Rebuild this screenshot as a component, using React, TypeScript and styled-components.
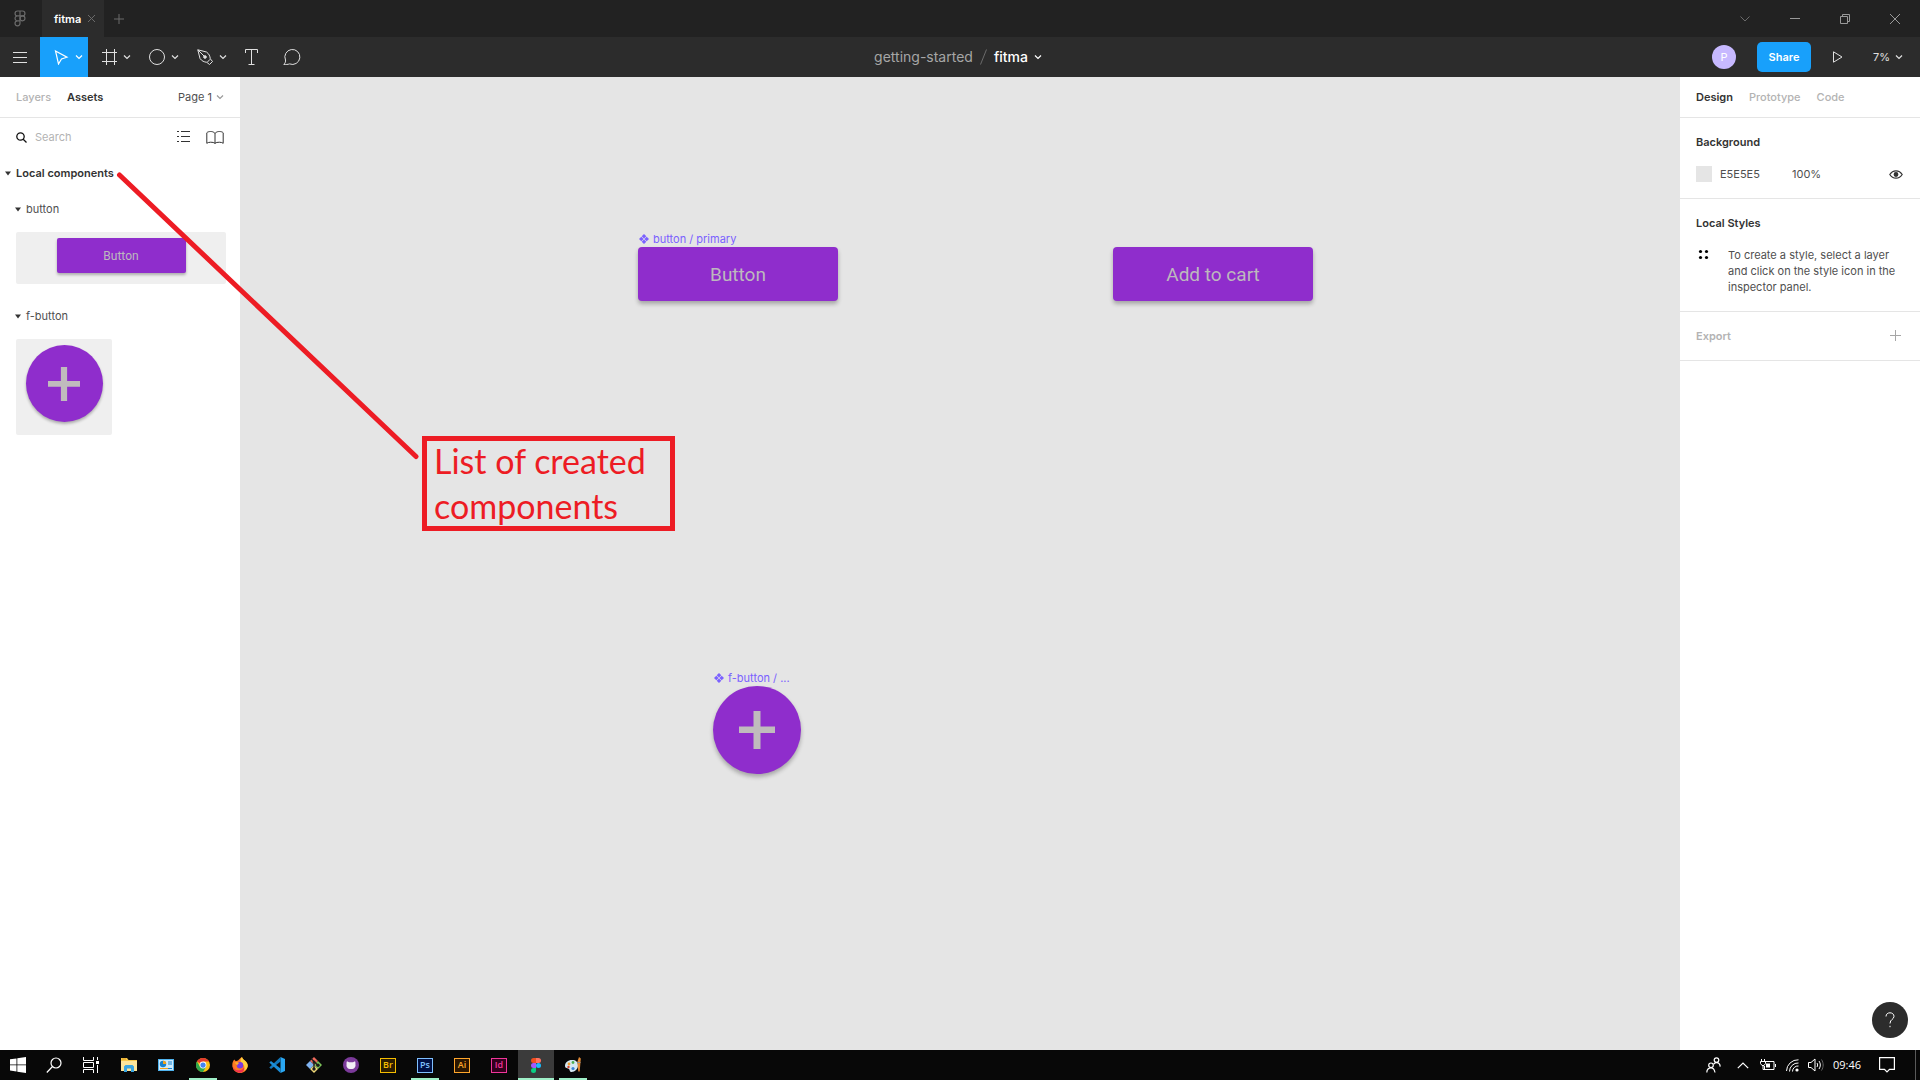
import React from "react";
import styled, { createGlobalStyle, css } from "styled-components";

const c = {
  blue: "#18a0fb",
  purple: "#8f2dcc",
  label: "#7b61ff",
  onPurple: "#bdb9bd",
  red: "#ed1c24",
  ink: "#333333",
  body: "#4f4f4f",
  soft: "#b3b3b3",
  line: "#e5e5e5",
};

const Global = createGlobalStyle`
  *, *::before, *::after { box-sizing: border-box; }
  body { margin: 0; }
  body, button, input { font-family: Inter, "Liberation Sans", sans-serif; font-size: 11px; line-height: 16px; }
  button { border: 0; padding: 0; background: none; color: inherit; cursor: default; }
  h1, h2, h3, p { margin: 0; font-size: 11px; font-weight: 400; }
  svg { display: block; flex: none; }
`;

const Screen = styled.div`
  display: flex;
  flex-direction: column;
  min-height: 100vh;
  position: relative;
  overflow: hidden;
`;

/* ---------- title bar ---------- */
const TitleBar = styled.header`
  display: flex;
  height: 37px;
  background: #222222;
  color: #6b6b6b;
`;
const HomeButton = styled.button`
  width: 42px;
  padding-right: 2px;
  display: grid;
  place-items: center;
`;
const FileTab = styled.div`
  display: flex;
  align-items: center;
  gap: 6px;
  padding: 0 8px 0 12px;
  background: #2c2c2c;
  color: #ffffff;
  font-weight: 600;
`;
const TabAction = styled.button`
  display: grid;
  place-items: center;
  color: #6b6b6b;
`;
const NewTab = styled(TabAction)`
  width: 30px;
`;
const WindowControls = styled.div`
  display: flex;
  margin-left: auto;
`;
const WindowButton = styled.button`
  width: 50px;
  display: grid;
  place-items: center;
`;

/* ---------- toolbar ---------- */
const Toolbar = styled.nav`
  display: grid;
  grid-template-columns: 1fr auto 1fr;
  height: 40px;
  background: #2c2c2c;
  color: #e0e0e0;
`;
const Tools = styled.div`
  display: flex;
`;
const Tool = styled.button<{ $active?: boolean; $menu?: boolean }>`
  display: flex;
  align-items: center;
  justify-content: ${(p) => (p.$menu ? "flex-start" : "center")};
  gap: 6px;
  width: ${(p) => (p.$menu ? 48 : 40)}px;
  padding-left: ${(p) => (p.$menu ? 13 : 0)}px;
  ${(p) => p.$active && css`background: ${c.blue}; color: #ffffff;`}
`;
const FileName = styled.div`
  display: flex;
  align-items: center;
  gap: 7px;
  padding-right: 4px;
  font-size: 14px;
  color: #a6a6a6;
`;
const FileMenu = styled.button`
  display: flex;
  align-items: center;
  gap: 6px;
  font-size: 14px;
  font-weight: 500;
  color: #ffffff;
`;
const Sharing = styled.div`
  display: flex;
  align-items: center;
  justify-content: flex-end;
  padding-right: 17px;
`;
const Avatar = styled.span`
  width: 24px;
  height: 24px;
  margin-right: 21px;
  border-radius: 50%;
  background: #c7b9ff;
  color: #ffffff;
  display: grid;
  place-items: center;
`;
const ShareButton = styled.button`
  width: 54px;
  height: 30px;
  margin-right: 20px;
  border-radius: 5px;
  background: ${c.blue};
  color: #ffffff;
  font-weight: 600;
`;
const ZoomButton = styled.button`
  display: flex;
  align-items: center;
  gap: 5px;
  margin-left: 30px;
`;

/* ---------- workspace ---------- */
const Workspace = styled.div`
  flex: 1;
  display: grid;
  grid-template-columns: 240px minmax(0, 1fr) 240px;
`;
const Panel = styled.aside`
  background: #ffffff;
  color: ${c.ink};
`;
const PanelTabs = styled.div`
  display: flex;
  align-items: center;
  gap: 16px;
  height: 41px;
  padding: 0 16px;
  border-bottom: 1px solid ${c.line};
`;
const PanelTab = styled.button<{ $on?: boolean }>`
  font-weight: ${(p) => (p.$on ? 600 : 500)};
  color: ${(p) => (p.$on ? c.ink : c.soft)};
`;
const PageMenu = styled.button`
  display: flex;
  align-items: center;
  gap: 4px;
  margin-left: auto;
  color: ${c.body};
`;
const SearchRow = styled.div`
  display: flex;
  align-items: center;
  height: 38px;
  padding: 0 16px;
`;
const SearchField = styled.label`
  display: flex;
  align-items: center;
  flex: 1;
  gap: 8px;
`;
const SearchInput = styled.input`
  width: 100px;
  border: 0;
  padding: 0;
  outline: 0;
  background: none;
  &::placeholder { color: ${c.soft}; opacity: 1; }
`;
const IconButton = styled.button`
  display: grid;
  place-items: center;
  margin-left: 16px;
`;
const RowAction = styled.button`
  display: grid;
  place-items: center;
  width: 16px;
  height: 16px;
  margin-left: auto;
`;
const Disclosure = styled.button<{ $sub?: boolean }>`
  display: flex;
  align-items: center;
  gap: 5px;
  height: ${(p) => (p.$sub ? 38 : 34)}px;
  padding-left: ${(p) => (p.$sub ? 15 : 5)}px;
  font-weight: ${(p) => (p.$sub ? 400 : 600)};
  color: ${(p) => (p.$sub ? c.body : c.ink)};
`;
const AssetGroup = styled.section`
  padding-bottom: 13px;
`;
const AssetCard = styled.div<{ $square?: boolean }>`
  display: flex;
  justify-content: center;
  margin: 4px 14px 0 16px;
  padding-top: 6px;
  width: ${(p) => (p.$square ? "96px" : "auto")};
  height: ${(p) => (p.$square ? 96 : 52)}px;
  border-radius: 2px;
  background: #efefef;
`;

/* ---------- designed components ---------- */
const Purple = styled.div<{ $size: "small" | "large" }>`
  display: grid;
  place-items: center;
  background: ${c.purple};
  color: ${c.onPurple};
  box-shadow: 0 ${(p) => (p.$size === "large" ? "3px 4px" : "2px 3px")} rgba(0, 0, 0, 0.28);
`;
const PurpleButton = styled(Purple)`
  width: ${(p) => (p.$size === "large" ? 200 : 129)}px;
  height: ${(p) => (p.$size === "large" ? 54 : 35)}px;
  border-radius: ${(p) => (p.$size === "large" ? 4 : 2)}px;
  font: 400 ${(p) => (p.$size === "large" ? 19 : 12)}px Roboto, sans-serif;
`;
const PurpleRound = styled(Purple)`
  width: ${(p) => (p.$size === "large" ? 88 : 77)}px;
  height: ${(p) => (p.$size === "large" ? 88 : 77)}px;
  border-radius: 50%;
`;

/* ---------- canvas ---------- */
const Canvas = styled.main`
  position: relative;
  background: #e5e5e5;
`;
const Node = styled.div<{ $x: number; $y: number }>`
  position: absolute;
  left: ${(p) => p.$x}px;
  top: ${(p) => p.$y}px;
`;
const NodeLabel = styled.div`
  display: flex;
  align-items: center;
  gap: 4px;
  height: 16px;
  padding-left: 1px;
  color: ${c.label};
  white-space: nowrap;
`;
const Note = styled.p`
  display: flex;
  align-items: center;
  width: 253px;
  height: 95px;
  padding: 0 0 2px 7px;
  border: 5px solid ${c.red};
  color: ${c.red};
  font: 400 34px/45px Lato, sans-serif;
`;
const Pointer = styled.svg`
  position: absolute;
  left: 0;
  top: 0;
  pointer-events: none;
`;

/* ---------- inspector ---------- */
const Section = styled.section<{ $bottom: number }>`
  padding: 12px 16px ${(p) => p.$bottom}px;
  border-bottom: 1px solid ${c.line};
`;
const SectionTitle = styled.h2<{ $muted?: boolean }>`
  display: flex;
  align-items: center;
  height: 24px;
  font-weight: 600;
  color: ${(p) => (p.$muted ? c.soft : c.ink)};
`;
const FillRow = styled.div`
  display: flex;
  align-items: center;
  height: 32px;
  margin-top: 4px;
`;
const Swatch = styled.span`
  width: 16px;
  height: 16px;
  background: #e5e5e5;
`;
const ValueInput = styled.input`
  width: 64px;
  margin-left: 8px;
  border: 0;
  padding: 0;
  color: ${c.body};
`;
const Hint = styled.div`
  display: flex;
  gap: 18px;
  margin-top: 12px;
  color: ${c.body};
`;
const HelpButton = styled.button`
  position: absolute;
  right: 12px;
  bottom: 42px;
  width: 36px;
  height: 36px;
  border-radius: 50%;
  background: #2c2c2c;
  color: #ffffff;
  display: grid;
  place-items: center;
`;

/* ---------- taskbar ---------- */
const Taskbar = styled.footer`
  display: flex;
  height: 30px;
  background: #080808;
  color: #ffffff;
`;
const TaskGroup = styled.div<{ $gap?: number }>`
  display: flex;
  gap: ${(p) => p.$gap ?? 0}px;
`;
const Apps = styled(TaskGroup)`
  margin-left: 3px;
`;
const TaskButton = styled.button<{ $state?: "open" | "active" }>`
  width: 36px;
  display: grid;
  place-items: center;
  background: ${(p) => (p.$state === "active" ? "#3b3b3b" : "none")};
  ${(p) => p.$state && css`
    background-image: linear-gradient(#9ff0c8, #9ff0c8);
    background-repeat: no-repeat;
    background-position: center bottom;
    background-size: ${p.$state === "active" ? 36 : 28}px 2px;
  `}
`;
const AdobeTile = styled.span<{ $fg: string; $bg: string }>`
  width: 16px;
  height: 15px;
  border: 1px solid ${(p) => p.$fg};
  background: ${(p) => p.$bg};
  color: ${(p) => p.$fg};
  font: 600 9px/12px "Open Sans", sans-serif;
  text-align: center;
`;
const Tray = styled.div`
  display: flex;
  align-items: center;
  margin-left: auto;
  padding-right: 4px;
`;
const TrayButton = styled.button<{ $w: number }>`
  width: ${(p) => p.$w}px;
  height: 30px;
  display: grid;
  place-items: center;
`;
const Clock = styled.time`
  width: 40px;
  text-align: center;
  white-space: nowrap;
  font: 400 11px/16px "Open Sans", sans-serif;
`;
const ShowDesktop = styled.button`
  height: 30px;
  width: 1px;
  margin-left: 8px;
  background: #5a5a5a;
`;

type LineProps = { w: number; h: number; d: string; color?: string; sw?: number; children?: React.ReactNode };
const Line = ({ w, h, d, color = "currentColor", sw = 1, children }: LineProps) => (
  <svg width={w} height={h} viewBox={`0 0 ${w} ${h}`} fill="none" stroke={color} strokeWidth={sw} aria-hidden="true">
    <path d={d} />
    {children}
  </svg>
);
const Chevron = ({ color }: { color?: string }) => <Line w={8} h={6} d="M1 1.500l3 3 3-3" sw={1.2} color={color} />;
const Triangle = () => (
  <svg width="6" height="5" aria-hidden="true"><path d="M0 .5h6L3 4.500z" fill="#333" /></svg>
);
const ComponentMark = () => (
  <svg width="10" height="10" viewBox="0 0 10 10" fill={c.label} aria-hidden="true">
    <path d="M5 0l2.300 2.300L5 4.600 2.700 2.300zM5 5.400l2.300 2.300L5 10 2.700 7.700zM2.300 2.700L4.600 5 2.300 7.300 0 5zM7.700 2.700L10 5 7.700 7.300 5.400 5z" />
  </svg>
);
const Plus = ({ large }: { large?: boolean }) => (
  <svg width={large ? 36 : 32} height={large ? 38 : 34} viewBox="0 0 36 38" aria-hidden="true">
    <path d="M14.500 0h7v15.500H36V22H21.500v16h-7V22H0v-6.500h14.500z" fill="#c0bbbd" />
  </svg>
);

const Start = () => (
  <svg width="16" height="16" viewBox="0 0 16 16" fill="#fff"><path d="M0 2.300l6.500-.9v6.100H0zM7.300 1.300L16 0v7.500H7.300zM0 8.300h6.500v6.200L0 13.600zM7.300 8.300H16V16l-8.700-1.200z" /></svg>
);
const Explorer = () => (
  <svg width="18" height="16" viewBox="0 0 18 16">
    <path d="M1 1h6l1.500 2H17v11H1z" fill="#f5c84c" /><path d="M1 4h16v10H1z" fill="#fde59a" />
    <path d="M2 2h4" stroke="#e39b1f" /><path d="M4 15V9.500L5.500 8h7L14 9.500V15h-3v-3.500H7V15z" fill="#3aa5e0" />
  </svg>
);
const Control = () => (
  <svg width="16" height="12" viewBox="0 0 16 12">
    <path d="M0 0h16v12H0z" fill="#4fb3ee" /><path d="M1 1h14v10H1z" fill="#cdeafd" />
    <circle cx="5" cy="5" r="3.200" fill="#1681cf" /><path d="M5 5V1.800A3.200 3.200 0 0 1 8.200 5z" fill="#f4a21b" />
    <path d="M10 3h4M10 5h4" stroke="#1681cf" /><path d="M2 9.500h8" stroke="#f4a21b" /><path d="M10 9.500h4" stroke="#1681cf" />
  </svg>
);
const Chrome = () => (
  <svg width="14" height="14" viewBox="0 0 16 16">
    <circle cx="8" cy="8" r="8" fill="#fbc116" />
    <path d="M8 8L1.070 4A8 8 0 0 1 14.930 4H8z" fill="#e33b2e" />
    <path d="M8 8L4.600 10 1.070 4A8 8 0 0 0 8 16l3.460-6z" fill="#2da94f" />
    <circle cx="8" cy="8" r="3.900" fill="#fff" /><circle cx="8" cy="8" r="3" fill="#4285f4" />
  </svg>
);
const Firefox = () => (
  <svg width="16" height="16" viewBox="0 0 16 16">
    <path d="M2.200 2.500l1.600 1.800L6 3.500C7.500 2 8.600 1 10 0c.3 1.700 1.500 2.300 2.800 3.500C15 5.300 16 7.300 15.700 9.500A7.700 7.700 0 0 1 .4 9C.1 6.500.8 4.200 2.200 2.500z" fill="#ff7a22" />
    <path d="M10 0c.3 1.700 1.500 2.300 2.800 3.500 2 1.700 3.200 3.600 2.900 5.700-.5 2.300-1.700 3.800-3.700 4.600 1.300-3.300.3-6-2.700-8.300C8 4.300 8.300 1.500 10 0z" fill="#ffd23c" />
    <path d="M.5 8c.3 3 3 5.500 6.500 5.300 2.500-.1 4-1.300 5-2.800.6 2-.5 4-2.500 5.100A7.700 7.700 0 0 1 .4 9z" fill="#f2304f" />
    <circle cx="8" cy="8.200" r="3.200" fill="#7a3ae0" /><path d="M2.500 5.500c2.200-.8 3.800-.2 5 .8C6 6.500 5.500 7.300 5.300 8.500z" fill="#ffb02e" />
  </svg>
);
const VSCode = () => (
  <svg width="16" height="16" viewBox="0 0 16 16">
    <path d="M11.500 0L16 2v12l-4.500 2z" fill="#2aa7f2" />
    <path d="M11.500 0v4.500L2 12 .3 10.500z" fill="#1279bd" /><path d="M11.500 16v-4.500L2 4 .3 5.500z" fill="#1c8ed8" />
  </svg>
);
const Git = () => (
  <svg width="16" height="16" viewBox="0 0 16 16">
    <path d="M8 0l4 4-4 4-4-4z" fill="#f06a5c" /><path d="M12 4l4 4-4 4-4-4z" fill="#7cc25a" />
    <path d="M8 8l4 4-4 4-4-4z" fill="#f4dc7b" /><path d="M4 4l4 4-4 4-4-4z" fill="#7fb2f0" />
    <path d="M5 1.500l7 7M8 4.500v7" stroke="#1c1c1c" strokeWidth="1.300" />
    <circle cx="8" cy="12" r="1.700" fill="#1c1c1c" /><circle cx="12" cy="8.300" r="1.700" fill="#1c1c1c" /><circle cx="8" cy="5" r="1.500" fill="#1c1c1c" />
  </svg>
);
const GitHub = () => (
  <svg width="16" height="16" viewBox="0 0 16 16">
    <circle cx="8" cy="8" r="8" fill="#7b3a9a" />
    <path d="M4 4.200l2 1.100h4l2-1.100c.5 1.200.6 2 .4 2.800.6 2.900-.7 5-4.400 5S3 9.900 3.600 7c-.2-.8-.1-1.600.4-2.800z" fill="#f3eef6" />
  </svg>
);
const Figma = ({ mono }: { mono?: boolean }) =>
  mono ? (
    <Line w={12} h={17} sw={1.2} d="M6 1H3.500a2.400 2.400 0 0 0 0 4.900H6zM6 1h2.500a2.400 2.400 0 0 1 0 4.900H6zM6 5.900H3.500a2.400 2.400 0 0 0 0 4.900H6zM3.500 10.800A2.500 2.500 0 1 0 6 13.300V10.800z">
      <circle cx="8.500" cy="8.350" r="2.450" />
    </Line>
  ) : (
    <svg width="10" height="15" viewBox="0 0 10 15">
      <path d="M5 0H2.500a2.500 2.500 0 0 0 0 5H5z" fill="#f24e1e" /><path d="M5 0h2.500a2.500 2.500 0 0 1 0 5H5z" fill="#ff7262" />
      <path d="M5 5H2.500a2.500 2.500 0 0 0 0 5H5z" fill="#a259ff" /><circle cx="7.500" cy="7.500" r="2.500" fill="#1abcfe" />
      <path d="M2.500 10H5v2.500A2.500 2.500 0 1 1 2.500 10z" fill="#0acf83" />
    </svg>
  );
const Paint = () => (
  <svg width="17" height="16" viewBox="0 0 17 16">
    <path d="M7 3c4 0 6 2 6 5.500S10 15 6.500 15c-2 0-1.500-2-2.500-3S0 11.500 0 9c0-3.500 3-6 7-6z" fill="#d5e8f2" />
    <circle cx="4" cy="7" r="1.400" fill="#f0a030" /><circle cx="8" cy="5.500" r="1.400" fill="#4caf50" /><circle cx="3.500" cy="10" r="1.200" fill="#d6402c" /><circle cx="8" cy="11.500" r="1.600" fill="#3b82d6" />
    <path d="M14 0l1.800 1.500-.3 3.500-.8 9.500h-1.400L12.300 5z" fill="#e38a35" /><path d="M12.300 5.500h3.200" stroke="#8a8f94" />
  </svg>
);

const adobe = (text: string, fg: string, bg: string) => <AdobeTile $fg={fg} $bg={bg}>{text}</AdobeTile>;

const apps: { name: string; icon: React.ReactNode; state?: "open" | "active" }[] = [
  { name: "File Explorer", icon: <Explorer /> },
  { name: "Control Panel", icon: <Control /> },
  { name: "Chrome", icon: <Chrome />, state: "open" },
  { name: "Firefox", icon: <Firefox /> },
  { name: "Visual Studio Code", icon: <VSCode /> },
  { name: "Git", icon: <Git /> },
  { name: "GitHub Desktop", icon: <GitHub /> },
  { name: "Bridge", icon: adobe("Br", "#f5bd00", "#2b1d00") },
  { name: "Photoshop", icon: adobe("Ps", "#7fc0ff", "#001044"), state: "open" },
  { name: "Illustrator", icon: adobe("Ai", "#ffa62b", "#2b1600") },
  { name: "InDesign", icon: adobe("Id", "#f0359a", "#33001d") },
  { name: "Figma", icon: <Figma />, state: "active" },
  { name: "Paint", icon: <Paint />, state: "open" },
];

const tools = [
  { name: "Move", menu: true, active: true, icon: <Line w={16} h={16} sw={1.2} d="M2.500 2L14 8.200 8.500 10 5.500 15z" /> },
  { name: "Frame", menu: true, icon: <Line w={16} h={16} d="M5.500 0v16M13.500 0v16M1 3.500h15M1 12.500h15" /> },
  { name: "Ellipse", menu: true, icon: <Line w={16} h={16} d="M8 .5a7.500 7.500 0 1 0 0 15 7.500 7.500 0 0 0 0-15z" /> },
  {
    name: "Pen", menu: true,
    icon: (
      <Line w={16} h={16} d="M.8.8L9.500 3C12 4.800 13 7 13.300 9.800l2.200 2.700-3 3-2.700-2.200C7 13 4.800 12 3 9.500zM.8.8L7 7M10.500 13l2.500-2.700">
        <circle cx="8" cy="8" r="1.300" fill="currentColor" />
      </Line>
    ),
  },
  { name: "Text", icon: <Line w={14} h={16} d="M.5 4V.5h12V4M6.500 .5v15M3.500 15.500h6" /> },
  { name: "Comment", icon: <Line w={18} h={16} d="M.8 15.400C2.300 14 2.800 12.500 2.500 11A7.500 7.500 0 1 1 6.500 14.900C4.800 15.600 3 15.500.8 15.400z" /> },
];

export default function App() {
  return (
    <Screen>
      <Global />
      <TitleBar>
        <HomeButton aria-label="Home"><Figma mono /></HomeButton>
        <FileTab>
          fitma
          <TabAction aria-label="Close tab"><Line w={9} h={9} d="M1 1l7 7M8 1L1 8" /></TabAction>
        </FileTab>
        <NewTab aria-label="New tab"><Line w={10} h={10} d="M5 0v10M0 5h10" /></NewTab>
        <WindowControls>
          <WindowButton aria-label="More"><Line w={10} h={6} d="M.5.5L5 5 9.500.5" /></WindowButton>
          <WindowButton aria-label="Minimize"><Line w={10} h={1} d="M0 .5h10" color="#999" /></WindowButton>
          <WindowButton aria-label="Restore"><Line w={10} h={10} d="M.5 2.500h7v7h-7zM2.500 2.500v-2h7v7h-2" color="#999" /></WindowButton>
          <WindowButton aria-label="Close"><Line w={10} h={10} d="M0 0l10 10M10 0L0 10" color="#999" /></WindowButton>
        </WindowControls>
      </TitleBar>

      <Toolbar>
        <Tools>
          <Tool aria-label="Menu"><Line w={14} h={11} d="M0 .5h14M0 5.500h14M0 10.500h14" /></Tool>
          {tools.map((t) => (
            <Tool key={t.name} aria-label={t.name} $active={t.active} $menu={t.menu}>
              {t.icon}
              {t.menu && <Chevron />}
            </Tool>
          ))}
        </Tools>
        <FileName>
          <span>getting-started</span>
          <Line w={7} h={16} d="M6.500.5l-6 15" color="#6b6b6b" />
          <FileMenu>fitma<Chevron /></FileMenu>
        </FileName>
        <Sharing>
          <Avatar>P</Avatar>
          <ShareButton>Share</ShareButton>
          <TabAction aria-label="Present"><Line w={12} h={12} d="M2.500.8v10.400L11 6z" color="#e0e0e0" /></TabAction>
          <ZoomButton>7%<Chevron /></ZoomButton>
        </Sharing>
      </Toolbar>

      <Workspace>
        <Panel>
          <PanelTabs>
            <PanelTab>Layers</PanelTab>
            <PanelTab $on>Assets</PanelTab>
            <PageMenu>Page 1<Chevron color="#999" /></PageMenu>
          </PanelTabs>
          <SearchRow>
            <SearchField>
              <Line w={11} h={11} sw={1.3} color="#111" d="M4.500.8a3.700 3.700 0 1 0 0 7.400 3.700 3.700 0 0 0 0-7.400zM7.200 7.200L10.500 10.500" />
              <SearchInput type="text" placeholder="Search" aria-label="Search" />
            </SearchField>
            <IconButton aria-label="List view"><Line w={13} h={12} d="M0 .5h2M4 .5h9M0 5.500h2M4 5.500h9M0 10.500h2M4 10.500h9" /></IconButton>
            <IconButton aria-label="Team library">
              <Line w={18} h={13} d="M9 2.500C7.500.5 5.500.5 4.500.5S1.500.8.8 1.800v10.500c1.200-1.300 6.500-1.600 8.200 0 1.700-1.600 7-1.300 8.200 0V1.800C16.500.8 14.500.5 13.500.5S10.500.5 9 2.500zM9 2.500v10" />
            </IconButton>
          </SearchRow>
          <Disclosure><Triangle />Local components</Disclosure>
          <AssetGroup>
            <Disclosure $sub><Triangle />button</Disclosure>
            <AssetCard><PurpleButton $size="small">Button</PurpleButton></AssetCard>
          </AssetGroup>
          <AssetGroup>
            <Disclosure $sub><Triangle />f-button</Disclosure>
            <AssetCard $square><PurpleRound $size="small"><Plus /></PurpleRound></AssetCard>
          </AssetGroup>
        </Panel>

        <Canvas>
          <Node $x={398} $y={154}>
            <NodeLabel><ComponentMark />button / primary</NodeLabel>
            <PurpleButton $size="large">Button</PurpleButton>
          </Node>
          <Node $x={873} $y={170}>
            <PurpleButton $size="large">Add to cart</PurpleButton>
          </Node>
          <Node $x={473} $y={593}>
            <NodeLabel><ComponentMark />f-button / ...</NodeLabel>
            <PurpleRound $size="large"><Plus large /></PurpleRound>
          </Node>
          <Node $x={182} $y={359}>
            <Note>List of created components</Note>
          </Node>
        </Canvas>

        <Panel>
          <PanelTabs>
            <PanelTab $on>Design</PanelTab>
            <PanelTab>Prototype</PanelTab>
            <PanelTab>Code</PanelTab>
          </PanelTabs>
          <Section $bottom={8}>
            <SectionTitle>Background</SectionTitle>
            <FillRow>
              <Swatch />
              <ValueInput aria-label="Background color" defaultValue="E5E5E5" />
              <ValueInput aria-label="Background opacity" defaultValue="100%" />
              <RowAction aria-label="Toggle visibility">
                <Line w={14} h={9} sw={1.2} d="M.8 4.500C2.500 1.800 4.500.8 7 .8s4.500 1 6.200 3.700C11.500 7.200 9.500 8.200 7 8.200S2.500 7.200.8 4.500z">
                  <circle cx="7" cy="4.500" r="1.800" fill="currentColor" />
                </Line>
              </RowAction>
            </FillRow>
          </Section>
          <Section $bottom={16}>
            <SectionTitle>Local Styles</SectionTitle>
            <Hint>
              <svg width="14" height="16" fill="#000" aria-hidden="true">
                <circle cx="4.500" cy="4.500" r="1.600" /><circle cx="10.500" cy="4.500" r="1.600" />
                <circle cx="4.500" cy="10.500" r="1.600" /><circle cx="10.500" cy="10.500" r="1.600" />
              </svg>
              <p>To create a style, select a layer and click on the style icon in the inspector panel.</p>
            </Hint>
          </Section>
          <Section $bottom={12}>
            <SectionTitle $muted>
              Export
              <RowAction aria-label="Add export"><Line w={12} h={12} d="M5.500 0v11M0 5.500h11" color="#a6a6a6" /></RowAction>
            </SectionTitle>
          </Section>
        </Panel>
      </Workspace>

      <Pointer width="430" height="470" aria-hidden="true">
        <path d="M119.500 175L416 456.500" stroke={c.red} strokeWidth="5" strokeLinecap="round" />
      </Pointer>
      <HelpButton aria-label="Help">
        <Line w={10} h={16} d="M1 4.500C1 2 2.800.8 5 .8s4 1.400 4 3.500C9 7.500 5 7.200 5 11.500M5 13.800v1.400" />
      </HelpButton>

      <Taskbar>
        <TaskGroup>
          <TaskButton aria-label="Start"><Start /></TaskButton>
          <TaskButton aria-label="Search"><Line w={16} h={16} sw={1.2} d="M10 1a5 5 0 1 0 0 10 5 5 0 0 0 0-10zM6.500 9.500L.8 15.500" /></TaskButton>
          <TaskButton aria-label="Task view"><Line w={17} h={16} d="M1.500 0v3.500h10V0M1.500 5.500h10v5h-10zM1.500 16v-3.500h10V16M15.500 0v3M15.500 8v8"><path d="M15.500 4v3" strokeWidth="3" /></Line></TaskButton>
        </TaskGroup>
        <Apps $gap={1}>
          {apps.map((a) => (
            <TaskButton key={a.name} aria-label={a.name} $state={a.state}>{a.icon}</TaskButton>
          ))}
        </Apps>
        <Tray>
          <TrayButton $w={32} aria-label="People">
            <Line w={15} h={16} sw={1.2} d="M5 6a2.300 2.300 0 1 0 0 4.600A2.300 2.300 0 0 0 5 6zM.8 15.500c0-3 1.800-4.700 4.200-4.700s3.500 1.700 4 4.700M10.500.8a2.300 2.300 0 1 0 0 4.600 2.300 2.300 0 0 0 0-4.600zM7.800 7.200c.8-1.200 1.700-1.600 2.700-1.600 2.300 0 3.500 1.400 3.700 4" />
          </TrayButton>
          <TrayButton $w={28} aria-label="Hidden icons"><Line w={12} h={7} sw={1.2} d="M.8 6.200L6 1l5.200 5.200" /></TrayButton>
          <TrayButton $w={22} aria-label="Battery">
            <Line w={16} h={12} d="M5 2.500h9v8H4.500V7M15.500 5v3M1.500 0v3M4.500 0v3M.5 2.500h5v2l-1.500 2h-2l-1.500-2zM3 6.500v4h2"><path d="M6 4.500h4v4H6z" fill="currentColor" stroke="none" /></Line>
          </TrayButton>
          <TrayButton $w={26} aria-label="Network">
            <Line w={13} h={13} d="M.5 12A11.500 11.500 0 0 1 12.500.8M3.500 12.500a8.500 8.500 0 0 1 9-8.500M6.500 12.500a5.500 5.500 0 0 1 6-5.500"><circle cx="11" cy="11" r="1.600" fill="currentColor" stroke="none" /></Line>
          </TrayButton>
          <TrayButton $w={22} aria-label="Volume">
            <Line w={16} h={14} d="M.5 4.500h2.500l4-3.500v12l-4-3.500H.5zM9 5c.8 1.200.8 2.800 0 4M11 3c1.800 2.500 1.800 5.500 0 8"><path d="M13.500 1.500c2.200 3.500 2.200 7.500 0 11" stroke="#666" /></Line>
          </TrayButton>
          <Clock>09:46</Clock>
          <TrayButton $w={40} aria-label="Notifications"><Line w={16} h={16} sw={1.2} d="M.6.6h14.800v11.800H10.500L8 15 5.500 12.400H.6z" /></TrayButton>
          <ShowDesktop aria-label="Show desktop" />
        </Tray>
      </Taskbar>
    </Screen>
  );
}
